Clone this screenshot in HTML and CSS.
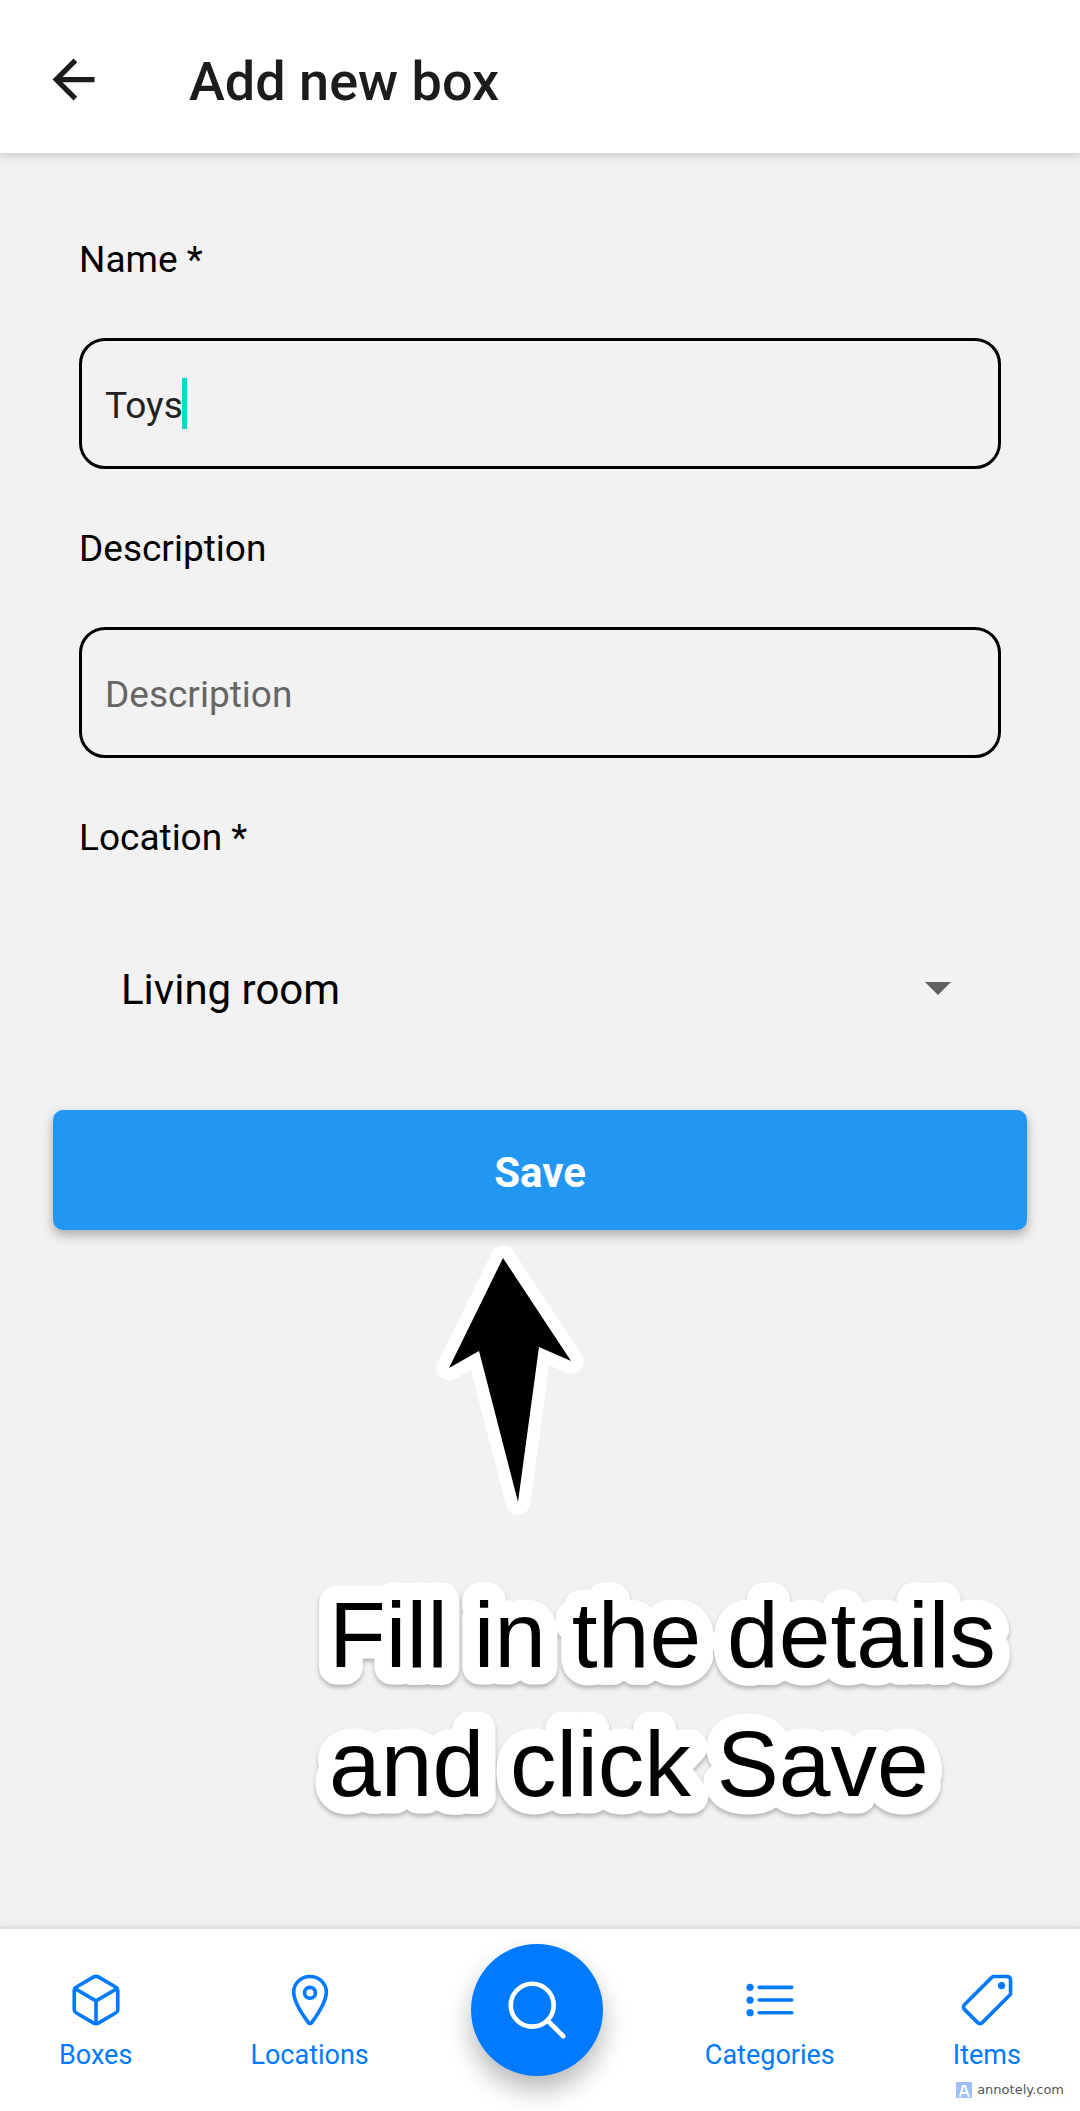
FILE: index.html
```html
<!DOCTYPE html>
<html lang="en">
<head>
<meta charset="utf-8">
<meta name="viewport" content="width=device-width, initial-scale=1">
<title>Add new box</title>
<link rel="stylesheet" href="styles.css">
</head>
<body>
<div class="screen">
  <header class="app-bar">
    <button class="back" type="button" aria-label="Back">
      <svg class="back-icon" viewBox="0 0 24 24"><path d="M20 11H7.83l5.59-5.59L12 4l-8 8 8 8 1.41-1.41L7.83 13H20z"/></svg>
    </button>
    <h1 class="title">Add new box</h1>
  </header>

  <main class="content">
    <form class="form">
      <div class="fields">
        <label class="label" for="name">Name *</label>
        <div class="stack">
          <input class="input" id="name" type="text" value="Toys">
          <span class="caret"></span>
        </div>
        <label class="label" for="description">Description</label>
        <input class="input" id="description" type="text" placeholder="Description">
        <label class="label" for="location">Location *</label>
        <div class="stack">
          <select class="select" id="location">
            <option>Living room</option>
          </select>
          <svg class="select-arrow" viewBox="0 0 26 13"><path d="M0 0h26L13 13z"/></svg>
        </div>
      </div>
      <button class="save" type="submit">Save</button>
    </form>

    <div class="hint">
      <svg class="hint-arrow" viewBox="0 0 150 272"><path d="M68 14 136 117 104 103 83 258 44 107 14 124z"/></svg>
      <svg class="hint-text" viewBox="0 0 700 250">
        <text x="17" y="91">Fill in the details</text>
        <text x="17" y="220">and click Save</text>
      </svg>
    </div>
  </main>

  <nav class="tabs">
    <a class="tab" href="#boxes">
      <svg class="tab-icon" viewBox="0 0 512 512"><path d="M448 341.37V170.61A32 32 0 00432.11 143l-152-88.46a47.94 47.94 0 00-48.24 0L79.89 143A32 32 0 0064 170.61v170.76A32 32 0 0079.89 369l152 88.46a48 48 0 0048.24 0l152-88.46A32 32 0 00448 341.37z"/><path d="M69 153.99l187 110 187-110M256 463.99v-200"/></svg>
      Boxes
    </a>
    <a class="tab" href="#locations">
      <svg class="tab-icon" viewBox="0 0 512 512"><path d="M256 48c-79.5 0-144 61.39-144 137 0 87 96 224.87 131.25 272.49a15.77 15.77 0 0025.5 0C304 409.89 400 272.07 400 185c0-75.61-64.5-137-144-137z"/><circle cx="256" cy="192" r="48"/></svg>
      Locations
    </a>
    <button class="search" type="button" aria-label="Search">
      <svg class="search-icon" viewBox="0 0 512 512"><circle cx="221" cy="221" r="157"/><path d="M338.29 338.29L448 448"/></svg>
    </button>
    <a class="tab" href="#categories">
      <svg class="tab-icon" viewBox="0 0 512 512"><path d="M160 144h288M160 256h288M160 368h288"/><circle class="dot" cx="80" cy="144" r="32"/><circle class="dot" cx="80" cy="256" r="32"/><circle class="dot" cx="80" cy="368" r="32"/></svg>
      Categories
    </a>
    <a class="tab" href="#items">
      <svg class="tab-icon" viewBox="0 0 512 512"><path d="M435.25 48h-122.9a14.46 14.46 0 00-10.2 4.2L56.45 297.9a28.85 28.85 0 000 40.7l117 117a28.85 28.85 0 0040.7 0L459.75 210a14.46 14.46 0 004.2-10.2v-123a28.66 28.66 0 00-28.7-28.8z"/><circle class="dot" cx="384" cy="128" r="32"/></svg>
      Items
    </a>
    <div class="watermark">
      <svg class="watermark-logo" viewBox="0 0 16 16"><rect width="16" height="16" rx="1" fill="#9dc0fb"/><path d="M4 15 7 4h2l4 11M6 11h6" fill="none" stroke="#fff" stroke-width="2"/></svg>
      annotely.com
    </div>
  </nav>
</div>
</body>
</html>
```
FILE: styles.css
```css
* {
  box-sizing: border-box;
}

body {
  margin: 0;
  background: #f2f2f2;
  color: #000;
  font-family: Roboto, "Liberation Sans", sans-serif;
  font-size: 37px;
  line-height: 44px;
}

button,
input,
select {
  margin: 0;
  font: inherit;
}

.screen {
  display: flex;
  flex-direction: column;
  min-height: 100vh;
}

/* Top bar */
.app-bar {
  display: flex;
  align-items: center;
  gap: 84px;
  padding: 48px 42px 42px;
  background: #fff;
  box-shadow: 0 2px 10px rgba(0, 0, 0, 0.2);
}

.back {
  display: flex;
  padding: 0;
  border: 0;
  background: none;
}

.back-icon {
  width: 63px;
  height: 63px;
  fill: #1c1c1e;
}

.title {
  margin: 0;
  padding-top: 4px;
  color: #1c1c1e;
  font-size: 54px;
  font-weight: 500;
  line-height: 56px;
}

/* Form */
.content {
  flex: 1;
  padding: 83px 53px 0;
}

.form {
  display: flex;
  flex-direction: column;
  gap: 47px;
}

.fields {
  display: flex;
  flex-direction: column;
  gap: 56px;
  padding: 0 26px;
}

.label {
  padding-top: 2px;
}

.stack {
  display: grid;
  align-items: center;
}

.stack > * {
  grid-area: 1 / 1;
}

.input {
  width: 100%;
  height: 131px;
  padding: 4px 23px 0;
  border: 3px solid #000;
  border-radius: 26px;
  outline: 0;
  background: transparent;
  color: #212121;
  caret-color: #00dbc5;
}

.input::placeholder {
  color: #666;
  opacity: 1;
}

.caret {
  width: 5px;
  height: 51px;
  margin-left: 103px;
  background: #00dbc5;
}

.select {
  width: 100%;
  height: 147px;
  padding: 0 42px;
  border: 0;
  appearance: none;
  background: transparent;
  color: #000;
  font-size: 42px;
  line-height: 52px;
}

.select-arrow {
  justify-self: end;
  width: 26px;
  height: 13px;
  margin: 0 50px 2px 0;
  fill: #616161;
  pointer-events: none;
}

.save {
  height: 120px;
  padding: 6px 0 0;
  border: 0;
  border-radius: 10px;
  background: #2196f3;
  box-shadow: 0 5px 12px rgba(0, 0, 0, 0.3);
  color: #fff;
  font-size: 42px;
  font-weight: 700;
}

/* Hint drawn under the form */
.hint {
  display: flex;
  flex-direction: column;
  align-items: center;
  gap: 60px;
  padding-top: 14px;
}

.hint-arrow {
  width: 150px;
  height: 272px;
  margin-right: 60px;
  stroke: #fff;
  stroke-width: 25px;
  stroke-linejoin: round;
  paint-order: stroke;
}

.hint-text {
  width: 700px;
  height: 250px;
  margin-left: 244px;
  overflow: visible;
  font-family: "Liberation Sans", Arial, sans-serif;
  font-size: 93px;
}

.hint-text text {
  stroke: #fff;
  stroke-width: 35px;
  stroke-linejoin: round;
  paint-order: stroke;
  filter: drop-shadow(0 3px 2px rgba(0, 0, 0, 0.25));
}

/* Bottom tabs */
.tabs {
  position: relative;
  display: flex;
  justify-content: space-around;
  align-items: flex-start;
  height: 185px;
  padding-top: 15px;
  border-top: 3px solid #e0e0e0;
  background: #fff;
  box-shadow: 0 0 8px rgba(0, 0, 0, 0.08);
  overflow-x: clip;
}

.tab {
  display: flex;
  flex-direction: column;
  align-items: center;
  gap: 10px;
  padding-top: 27px;
  color: #007aff;
  font-size: 27px;
  line-height: 32px;
  text-decoration: none;
}

.tab-icon {
  width: 58px;
  height: 58px;
  fill: none;
  stroke: currentColor;
  stroke-width: 32px;
  stroke-linecap: round;
  stroke-linejoin: round;
}

.dot {
  fill: currentColor;
  stroke: none;
}

.search {
  display: flex;
  align-items: center;
  justify-content: center;
  width: 132px;
  height: 132px;
  margin: 0 -16px;
  padding: 0;
  border: 0;
  border-radius: 50%;
  background: #007aff;
  box-shadow: 0 14px 26px rgba(0, 0, 0, 0.28);
}

.search-icon {
  width: 70px;
  height: 70px;
  fill: none;
  stroke: #fff;
  stroke-width: 34px;
  stroke-linecap: round;
}

.watermark {
  position: absolute;
  right: 11px;
  bottom: 10px;
  display: flex;
  align-items: center;
  gap: 5px;
  padding: 0 5px;
  background: #fefefe;
  color: #555;
  font-family: "DejaVu Sans", sans-serif;
  font-size: 13px;
  line-height: 22px;
}

.watermark-logo {
  width: 16px;
  height: 16px;
}
```
